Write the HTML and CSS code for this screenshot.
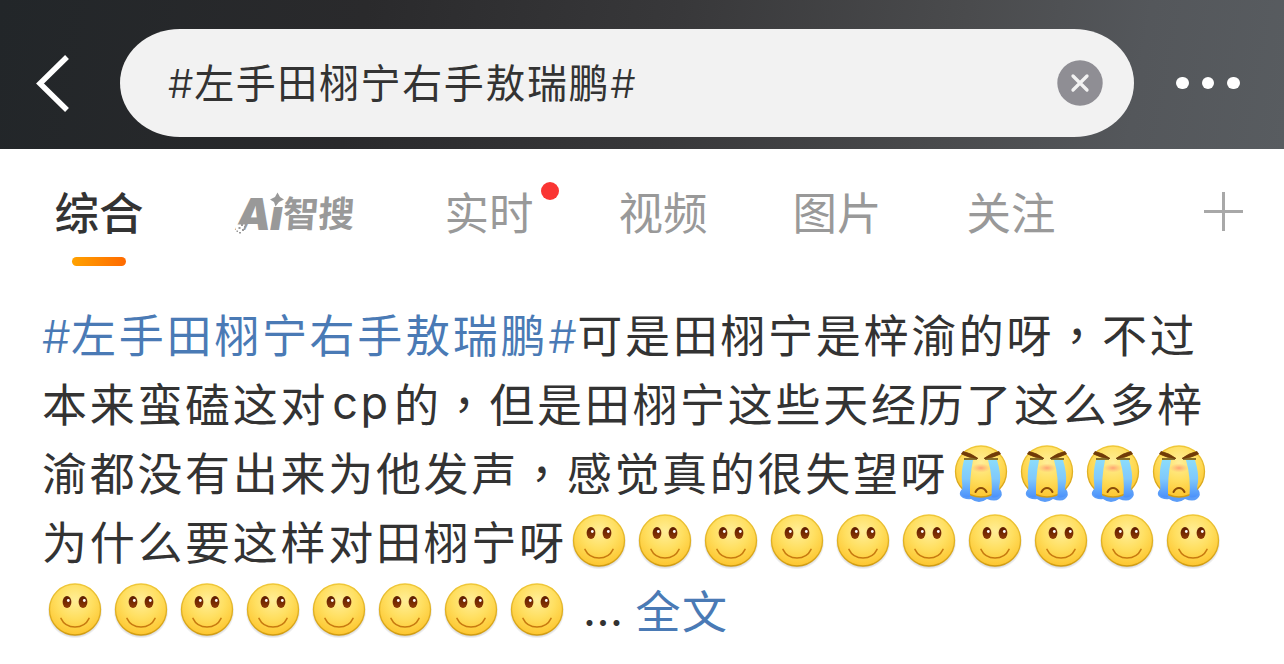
FILE: index.html
```html
<!DOCTYPE html>
<html lang="zh-CN">
<head>
    <meta charset="UTF-8">
    <meta name="viewport" content="width=device-width, initial-scale=1.0">
    <title>搜索</title>
    <link rel="stylesheet" href="styles.css">
</head>
<body>
    <!-- Emoji shapes used in the post -->
    <svg class="defs" width="0" height="0">
        <defs>
            <radialGradient id="face" cx="50%" cy="32%" r="70%">
                <stop offset="0" stop-color="#ffee98"/>
                <stop offset="0.5" stop-color="#ffdf60"/>
                <stop offset="1" stop-color="#fdc42c"/>
            </radialGradient>
            <linearGradient id="rim" x1="0" y1="0" x2="0" y2="1">
                <stop offset="0" stop-color="#f0c838"/>
                <stop offset="1" stop-color="#d29c10"/>
            </linearGradient>
            <linearGradient id="eye" x1="0" y1="0" x2="0" y2="1">
                <stop offset="0" stop-color="#5a1a00"/>
                <stop offset="1" stop-color="#8f3a05"/>
            </linearGradient>
            <linearGradient id="tear" x1="0" y1="0" x2="0" y2="1">
                <stop offset="0" stop-color="#8bdcfb"/>
                <stop offset="0.5" stop-color="#80c9fb"/>
                <stop offset="1" stop-color="#4a90fb"/>
            </linearGradient>
            <radialGradient id="blush">
                <stop offset="0" stop-color="#ff9a70" stop-opacity="0.9"/>
                <stop offset="1" stop-color="#ffb070" stop-opacity="0"/>
            </radialGradient>
            <radialGradient id="shade">
                <stop offset="0.85" stop-color="#000" stop-opacity="0.25"/>
                <stop offset="1" stop-color="#000" stop-opacity="0"/>
            </radialGradient>
            <symbol id="smile" viewBox="0 0 66 66">
                <circle cx="32" cy="34" r="27.5" fill="url(#shade)"/>
                <circle cx="32" cy="32.5" r="25.5" fill="url(#face)" stroke="url(#rim)" stroke-width="1.3"/>
                <ellipse cx="24" cy="25" rx="4.4" ry="6" fill="url(#eye)"/>
                <ellipse cx="40" cy="25" rx="4.4" ry="6" fill="url(#eye)"/>
                <circle cx="25.300" cy="23.500" r="1.4" fill="#fff"/>
                <circle cx="41.300" cy="23.500" r="1.4" fill="#fff"/>
                <path d="M18 41.500Q22 50 32 50Q42 50 46 41.500" fill="none" stroke="#c87a10" stroke-width="1.7" stroke-linecap="round"/>
            </symbol>
            <symbol id="cry" viewBox="0 0 66 66">
                <path d="M13 50q-5 6 1 9q5 2 8 1q8 6 16 0q8 3 12 0q5-4 1-10z" fill="#5b9df8"/>
                <circle cx="32" cy="32.5" r="25.5" fill="url(#face)" stroke="url(#rim)" stroke-width="1.3"/>
                <ellipse cx="32" cy="29" rx="9.5" ry="4.5" fill="url(#blush)"/>
                <path d="M15 21H24Q20.500 38 21 58Q15 60 12 55Q14 50 13 43Q12 32 15 21Z" fill="url(#tear)"/>
                <path d="M39 21H48Q52 34 51 43Q49 51 52 55Q48 60 42.500 58Q44 38 39 21Z" fill="url(#tear)"/>
                <path d="M15 20H28M36 20H49" stroke="#5f4a12" stroke-width="1.6"/>
                <path d="M14 12.500Q22 14 29 19.500Q20 19 12.500 15ZM50 12.500Q42 14 35 19.500Q44 19 51.500 15Z" fill="#713b07" stroke="#713b07" stroke-width="0.8"/>
                <path d="M26.500 53Q28.500 49 32 49Q35.500 49 37.500 53" fill="none" stroke="#8a4c08" stroke-width="2" stroke-linecap="round"/>
            </symbol>
        </defs>
    </svg>

    <!-- Search bar -->
    <div class="header">
        <svg class="back" width="36" height="60" viewBox="0 0 36 60">
            <path d="M32 4L5 30.500L32 57" fill="none" stroke="#fff" stroke-width="5.5"/>
        </svg>
        <div class="search">
            <span class="search-text"><span class="hash">#</span>左手田栩宁右手敖瑞鹏<span class="hash">#</span></span>
            <svg class="clear" width="46" height="46" viewBox="0 0 46 46">
                <circle cx="23" cy="23" r="22.700" fill="#8f8e94"/>
                <path d="M16 16L30 30M30 16L16 30" stroke="#f2f2f2" stroke-width="3.3" stroke-linecap="round"/>
            </svg>
        </div>
        <div class="more">
            <i class="dot"></i>
            <i class="dot"></i>
            <i class="dot"></i>
        </div>
    </div>

    <!-- Tabs -->
    <div class="tabs">
        <div class="tab active">综合</div>
        <div class="tab tab-ai">
            <div class="ai-logo">
                <span class="ai-a">A</span><span class="ai-i">i</span><span class="ai-name">智搜</span>
                <svg class="ai-star" width="124" height="46" viewBox="0 0 124 46">
                    <path d="M41.500 1.500L44 6L48 8.500L43 11L39.500 15.500L38 11L34 8.500L39 6Z" fill="#999"/>
                    <path d="M0 33.500H9L6 42H0Z" fill="#fff"/>
                    <path d="M5 33h2v2h-2zM8 35h1.500v2h-1.500zM2.500 36h2v2h-2zM6 38h2v2h-2zM0.500 39.500h1.500v1.500h-1.500zM3 41h2v1.500h-2z" fill="#999"/>
                </svg>
            </div>
        </div>
        <div class="tab"><span class="label">实时<i class="badge"></i></span></div>
        <div class="tab">视频</div>
        <div class="tab">图片</div>
        <div class="tab">关注</div>
        <svg class="add" width="40" height="40" viewBox="0 0 40 40">
            <path d="M0 20.500H39M19.500 1V40" stroke="#a8a8a8" stroke-width="3"/>
        </svg>
    </div>

    <!-- Post text -->
    <div class="post">
        <div class="line"><a class="topic"><span class="hash">#</span>左手田栩宁右手敖瑞鹏<span class="hash">#</span></a>可是田栩宁是梓渝的呀<span class="comma">，</span>不过</div>
        <div class="line">本来蛮磕这对<span class="latin">cp</span>的<span class="comma">，</span>但是田栩宁这些天经历了这么多梓</div>
        <div class="line">渝都没有出来为他发声<span class="comma">，</span>感觉真的很失望呀<span class="emojis cries"><svg class="emoji"><use href="#cry"/></svg><svg class="emoji"><use href="#cry"/></svg><svg class="emoji"><use href="#cry"/></svg><svg class="emoji"><use href="#cry"/></svg></span></div>
        <div class="line">为什么要这样对田栩宁呀<span class="emojis smiles"><svg class="emoji"><use href="#smile"/></svg><svg class="emoji"><use href="#smile"/></svg><svg class="emoji"><use href="#smile"/></svg><svg class="emoji"><use href="#smile"/></svg><svg class="emoji"><use href="#smile"/></svg><svg class="emoji"><use href="#smile"/></svg><svg class="emoji"><use href="#smile"/></svg><svg class="emoji"><use href="#smile"/></svg><svg class="emoji"><use href="#smile"/></svg><svg class="emoji"><use href="#smile"/></svg></span></div>
        <div class="line last"><span class="emojis"><svg class="emoji"><use href="#smile"/></svg><svg class="emoji"><use href="#smile"/></svg><svg class="emoji"><use href="#smile"/></svg><svg class="emoji"><use href="#smile"/></svg><svg class="emoji"><use href="#smile"/></svg><svg class="emoji"><use href="#smile"/></svg><svg class="emoji"><use href="#smile"/></svg><svg class="emoji"><use href="#smile"/></svg></span><span class="ellipsis">...</span><a class="topic">全文</a></div>
    </div>
</body>
</html>
```

FILE: styles.css
```css
body {
    margin: 0;
    padding: 0;
    width: 1284px;
    height: 664px;
    overflow: hidden;
    background-color: #fff;
    font-family: Inter, "Noto Sans CJK SC", sans-serif;
    color: #333;
}

.defs {
    position: absolute;
}

/* Search bar */
.header {
    display: flex;
    align-items: center;
    height: 149px;
    padding: 17px 0 0 35px;
    box-sizing: border-box;
    background: linear-gradient(100deg, #222629 0%, #2a2a2c 28%, #38383a 52%, #4a4b4d 74%, #54575b 88%, #585c60 100%);
}

.back {
    margin-right: 49px;
}

.search {
    display: flex;
    align-items: center;
    justify-content: space-between;
    width: 1014px;
    height: 108px;
    padding: 0 31px 0 48px;
    box-sizing: border-box;
    border-radius: 60px / 54px;
    background-color: #f2f2f2;
}

.search-text {
    padding-bottom: 4px;
    font-size: 40px;
    letter-spacing: 1.6px;
    white-space: nowrap;
}

.hash {
    font-weight: 300;
    letter-spacing: 0.8px;
}

.more {
    display: flex;
    gap: 13px;
    margin-left: 42px;
}

.dot {
    width: 12.5px;
    height: 12.5px;
    border-radius: 50%;
    background-color: #fff;
}

/* Tabs */
.tabs {
    display: flex;
    height: 128px;
    padding-left: 12px;
    font-size: 44.5px;
    line-height: 130px;
    color: #999;
}

.tab {
    position: relative;
    width: 174px;
    text-align: center;
}

.tab.active {
    color: #333;
    font-weight: 500;
}

.tab.active::after {
    content: "";
    position: absolute;
    left: 60px;
    top: 108px;
    width: 54px;
    height: 9px;
    border-radius: 5px;
    background: linear-gradient(90deg, #ffa200, #ff6a00);
}

.label {
    position: relative;
}

.badge {
    position: absolute;
    right: -25px;
    top: -5px;
    width: 18px;
    height: 18px;
    border-radius: 50%;
    background-color: #fa3533;
}

.tab-ai {
    width: 216px;
}

.ai-logo {
    display: flex;
    position: relative;
    width: 124px;
    height: 46px;
    margin: 42px 0 0 50px;
    line-height: 46px;
    font-weight: 900;
    white-space: nowrap;
}

.ai-a,
.ai-i {
    font-family: Inter, sans-serif;
    font-size: 44px;
    font-style: italic;
    font-weight: 900;
}

.ai-i {
    margin-left: -1px;
    clip-path: inset(16px 0 0 0);
}

.ai-name {
    font-size: 36px;
    font-weight: 700;
    letter-spacing: -0.5px;
    transform: skewX(-4deg);
}

.ai-star {
    position: absolute;
    left: 0;
    top: 0;
}

.add {
    margin: 42px 0 0 106px;
}

/* Post text */
.post {
    padding: 22px 0 0 42px;
}

.line {
    display: flex;
    align-items: center;
    height: 69px;
    font-size: 45px;
    letter-spacing: 2.7px;
    white-space: nowrap;
}

.line .hash {
    letter-spacing: 0.6px;
}

.topic {
    color: #4a7ab5;
}

.comma {
    font-family: "Noto Sans CJK TC", sans-serif;
}

.latin {
    margin: 0 3px 0 4px;
}

.emojis {
    display: flex;
}

.cries {
    margin-left: 1px;
}

.emoji {
    width: 66px;
    height: 66px;
    flex: none;
}

.last {
    padding-left: 1px;
}

.ellipsis {
    margin: 0 12px 0 12px;
    letter-spacing: 0.5px;
}

.last .topic {
    letter-spacing: 1.5px;
}
```
